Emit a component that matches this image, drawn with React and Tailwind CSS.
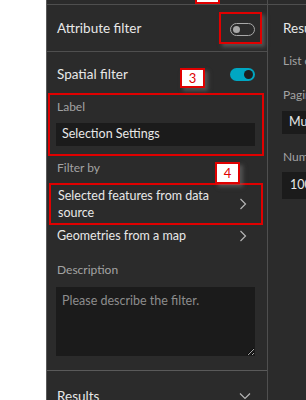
import React from "react";

function Toggle({ on }) {
  if (on) {
    return (
      <div className="w-[25px] h-[13px] rounded-full bg-[#00a7c2] flex items-center justify-end pr-[2px]">
        <div className="w-[9px] h-[9px] rounded-full bg-[#1e1e1e]" />
      </div>
    );
  }
  return (
    <div className="w-[25px] h-[13px] rounded-full border-[1.5px] border-[#a8a8a8] flex items-center pl-[2px]">
      <div className="w-[7px] h-[7px] rounded-full bg-[#a8a8a8]" />
    </div>
  );
}

function Chevron() {
  return (
    <svg width="8" height="12" viewBox="0 0 8 12" fill="none" className="shrink-0">
      <path d="M1.5 1 L6.5 6 L1.5 11" stroke="#b5b5b5" strokeWidth="1.2" />
    </svg>
  );
}

function Badge({ n, className }) {
  return (
    <div
      className={
        "absolute bg-white border-2 border-[#e00000] text-[#e00000] text-[13px] leading-none flex items-center justify-center shadow-[3px_3px_4px_rgba(110,110,110,0.6)] " +
        className
      }
    >
      {n}
    </div>
  );
}

export default function App() {
  return (
    <div
      className="w-[306px] h-[400px] flex bg-white overflow-hidden text-[#e8e8e8]"
      style={{ fontFamily: "Lato, 'Noto Sans', sans-serif" }}
    >
      <div className="w-[46px] shrink-0 bg-white" />

      {/* settings panel */}
      <div className="relative w-[222px] shrink-0 bg-[#2b2b2b] border-l border-[#5a5a5a] border-r border-r-[#4f4f4f] flex flex-col [&>*]:shrink-0">
        <div className="h-[5px] border-b border-[#4f4f4f]" />
        <div className="absolute left-[148px] top-[-20px] w-[25px] h-[24px] bg-white border-2 border-[#e00000]" />

        {/* attribute filter */}
        <div className="h-[47px] border-b border-[#4f4f4f] flex items-center justify-between pl-[10px] pr-[5px]">
          <span className="text-[13.5px]">Attribute filter</span>
          <div className="w-[43px] h-[32px] border-2 border-[#e00000] flex items-center pl-[9px] pt-[2px] shadow-[3px_3px_4px_rgba(110,110,110,0.6)]">
            <Toggle on={false} />
          </div>
        </div>

        {/* spatial filter */}
        <div className="h-[41px] flex items-center justify-between pl-[10px] pr-[12px] pt-[4px]">
          <span className="text-[13.5px]">Spatial filter</span>
          <Toggle on />
        </div>
        <Badge n="3" className="left-[133px] top-[68px] w-[25px] h-[20px]" />

        <div className="ml-[1px] mr-[3px] h-[63px] border-2 border-[#e00000] pt-[4px]">
          <div className="pl-[7px] text-[12px] leading-[16px] text-[#a3a3a3]">Label</div>
          <div className="mt-[8px] ml-[6px] mr-[7px] h-[23px] bg-[#1b1b1b] flex items-center pl-[6px] text-[12.5px]">
            Selection Settings
          </div>
        </div>

        <div className="pl-[10px] mt-[4px] text-[12px] leading-[16px] text-[#a3a3a3]">Filter by</div>
        <Badge n="4" className="left-[168px] top-[162px] w-[25px] h-[22px]" />

        <div className="mt-[7px] ml-[2px] mr-[4px] h-[42px] border-2 border-[#e00000] flex items-center justify-between pl-[7px] pr-[14px]">
          <span className="text-[12.5px] leading-[17.5px] w-[160px]">Selected features from data source</span>
          <Chevron />
        </div>

        <div className="h-[22px] flex items-center justify-between pl-[10px] pr-[20px]">
          <span className="text-[12.5px]">Geometries from a map</span>
          <Chevron />
        </div>

        <div className="pl-[10px] mt-[15px] text-[12px] leading-[16px] text-[#a3a3a3]">Description</div>
        <textarea
          className="mt-[9px] ml-[9px] mr-[12px] h-[69px] bg-[#1b1b1b] text-[12.5px] pl-[6px] pt-[5px] outline-none placeholder:text-[#8d8d8d]"
          placeholder="Please describe the filter."
        />

        <div className="mt-[14px] border-t border-[#5a5a5a] flex items-center justify-between pl-[10px] pr-[16px] pt-[15px]">
          <span className="text-[13.5px]">Results</span>
          <svg width="12" height="8" viewBox="0 0 12 8" fill="none">
            <path d="M1 1.5 L6 6.5 L11 1.5" stroke="#b5b5b5" strokeWidth="1.2" />
          </svg>
        </div>
      </div>

      {/* right panel, cut off at the window edge */}
      <div className="flex-1 bg-[#2b2b2b] flex flex-col whitespace-nowrap overflow-hidden [&>*]:shrink-0">
        <div className="h-[5px] border-b border-[#4f4f4f]" />
        <div className="pl-[15px] mt-[14px] text-[13.5px] leading-[18px]">Results</div>
        <div className="pl-[15px] mt-[16px] text-[12px] leading-[16px] text-[#a3a3a3]">List of</div>
        <div className="pl-[15px] mt-[18px] text-[12px] leading-[16px] text-[#a3a3a3]">Pagination</div>
        <div className="ml-[14px] mt-[8px] h-[23px] bg-[#1b1b1b] flex items-center pl-[7px] text-[12.5px]">Multiple</div>
        <div className="pl-[15px] mt-[15px] text-[12px] leading-[16px] text-[#a3a3a3]">Number</div>
        <div className="ml-[14px] mt-[7px] h-[27px] bg-[#1b1b1b] flex items-center pl-[8px] text-[12.5px]">100</div>
      </div>
    </div>
  );
}
